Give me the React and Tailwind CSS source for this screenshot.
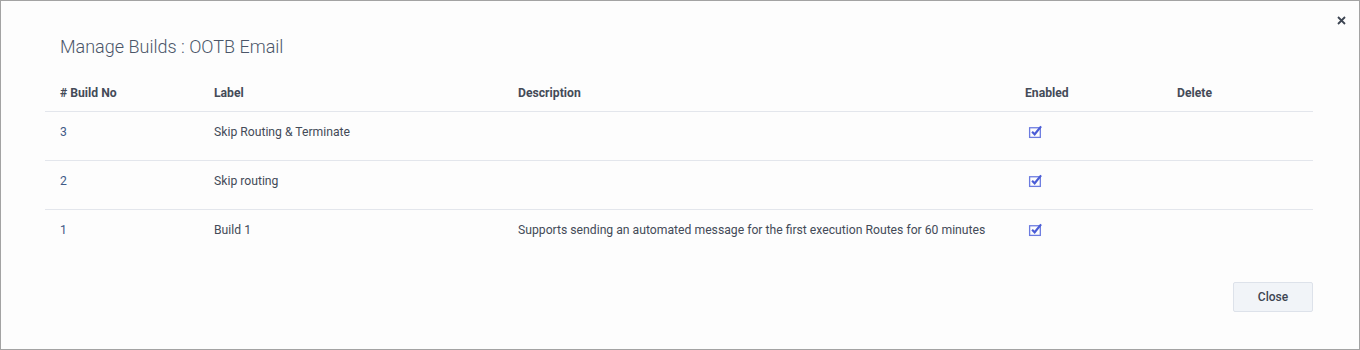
import React from 'react'

const builds = [
  { no: 3, label: 'Skip Routing & Terminate', description: '', enabled: true },
  { no: 2, label: 'Skip routing', description: '', enabled: true },
  { no: 1, label: 'Build 1', description: 'Supports sending an automated message for the first execution Routes for 60 minutes', enabled: true },
]

const CheckedBox = () => (
  <svg width="15" height="15" viewBox="0 0 14 14" className='block'>
    <rect x="1.5" y="3.5" width="10" height="9" fill="none" stroke="#6b7be0" strokeWidth="1.2" />
    <path d="M3.8 7.2 L6.2 9.6 L12.2 2.2" fill="none" stroke="#4a5cd6" strokeWidth="2" />
  </svg>
)

const App = () => {
  return (
    <div className='w-[1360px] h-[350px] bg-[#fdfdfd] border border-[#a3a3a3] relative' style={{ fontFamily: 'Roboto, "Liberation Sans", sans-serif' }}>
      {/* close x */}
      <button className='absolute right-[13px] top-[15px] text-[#3d4552]'>
        <svg width="9" height="9" viewBox="0 0 9 9">
          <path d="M1 1 L8 8 M8 1 L1 8" stroke="currentColor" strokeWidth="1.8" />
        </svg>
      </button>

      <div className='pl-[44px] pr-[46px] pt-[35px]'>
        <h2 className='pl-[15px] text-[18px] leading-[22px] font-light text-[#4b5669]'>Manage Builds : OOTB Email</h2>

        <table className='w-full mt-[16px] table-fixed text-[12.2px] text-[#444b58]'>
          <colgroup>
            <col className='w-[154px]' />
            <col className='w-[304px]' />
            <col className='w-[507px]' />
            <col className='w-[152px]' />
            <col />
          </colgroup>
          <thead>
            <tr className='border-b border-[#e3e6ec]'>
              <th className='text-left font-bold pl-[15px] pt-[11px] pb-[10px] leading-[16px]'># Build No</th>
              <th className='text-left font-bold pl-[15px] pt-[11px] pb-[10px] leading-[16px]'>Label</th>
              <th className='text-left font-bold pl-[15px] pt-[11px] pb-[10px] leading-[16px]'>Description</th>
              <th className='text-left font-bold pl-[15px] pt-[11px] pb-[10px] leading-[16px]'>Enabled</th>
              <th className='text-left font-bold pl-[15px] pt-[11px] pb-[10px] leading-[16px]'>Delete</th>
            </tr>
          </thead>
          <tbody>
            {builds.map((b, i) => (
              <tr key={b.no} className={`h-[49px] ${i < builds.length - 1 ? 'border-b border-[#e3e6ec]' : ''}`}>
                <td className='align-top pl-[15px] pt-[12px] leading-[16px] text-[#3f5a87]'>{b.no}</td>
                <td className='align-top pl-[15px] pt-[12px] leading-[16px]'>{b.label}</td>
                <td className='align-top pl-[15px] pt-[12px] leading-[16px]'>{b.description}</td>
                <td className='align-top pl-[18px] pt-[12px]'>
                  {b.enabled && <CheckedBox />}
                </td>
                <td></td>
              </tr>
            ))}
          </tbody>
        </table>

        <div className='flex justify-end mt-[23px]'>
          <button className='w-[80px] h-[30px] bg-[#f1f4f8] border border-[#dde2ea] rounded-[2px] text-[12px] font-medium text-[#3d4552]'>Close</button>
        </div>
      </div>
    </div>
  )
}

export default App
